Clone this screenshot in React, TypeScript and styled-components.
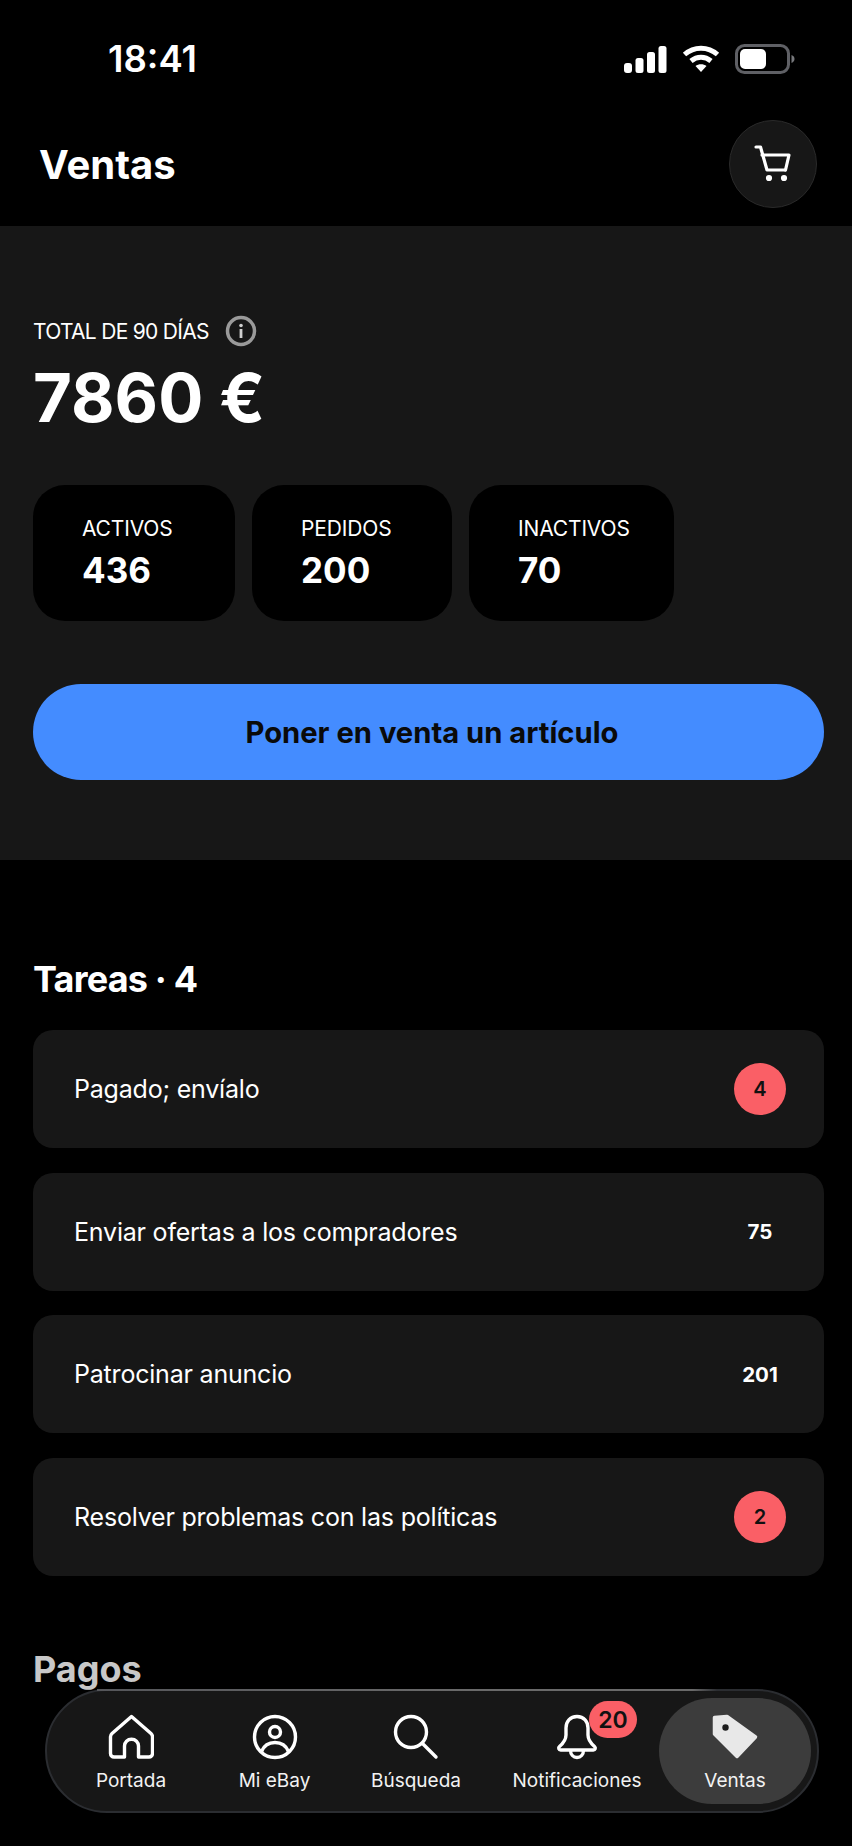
import React from "react";
import styled, { createGlobalStyle } from "styled-components";

const GlobalStyle = createGlobalStyle`
  html, body {
    margin: 0;
    padding: 0;
    background: #000;
  }
  body {
    font-family: "Inter", "Liberation Sans", sans-serif;
    color: #fff;
  }
`;

const Screen = styled.div`
  position: relative;
  width: 852px;
  height: 1846px;
  overflow: hidden;
  background: #000;
`;

const StatusBar = styled.div`
  height: 118px;
  padding: 0 57px 0 108px;
  box-sizing: border-box;
  display: flex;
  align-items: center;
  justify-content: space-between;
`;

const Clock = styled.span`
  font-size: 36.5px;
  font-weight: 600;
`;

const StatusIcons = styled.div`
  display: flex;
  align-items: center;
  gap: 15px;
`;

const Header = styled.header`
  height: 108px;
  padding: 0 35px 16px 39px;
  box-sizing: border-box;
  display: flex;
  align-items: center;
  justify-content: space-between;
`;

const PageTitle = styled.h1`
  margin: 0;
  font-size: 40px;
  font-weight: 700;
`;

const CartButton = styled.button`
  width: 88px;
  height: 88px;
  border: 1px solid #2a2a2a;
  border-radius: 50%;
  background: #171717;
  display: flex;
  align-items: center;
  justify-content: center;
  padding: 0;
`;

const Hero = styled.section`
  height: 634px;
  padding: 88px 28px 0 33px;
  box-sizing: border-box;
  background: #171717;
`;

const TotalRow = styled.div`
  display: flex;
  align-items: center;
  gap: 16px;
  height: 34px;
  font-size: 21px;
  letter-spacing: -0.7px;
`;

const TotalValue = styled.div`
  margin-top: 10px;
  font-size: 67px;
  line-height: 80px;
  font-weight: 700;
`;

const StatRow = styled.div`
  margin-top: 47px;
  display: flex;
  gap: 17px;
`;

const StatCard = styled.div<{ $width: number }>`
  width: ${(p) => p.$width}px;
  height: 136px;
  padding: 31px 0 0 49px;
  box-sizing: border-box;
  border-radius: 32px;
  background: #000;
`;

const StatLabel = styled.div`
  font-size: 21px;
  line-height: 26px;
  letter-spacing: -0.15px;
`;

const StatValue = styled.div`
  margin-top: 7px;
  font-size: 35px;
  line-height: 42px;
  font-weight: 700;
`;

const SellButton = styled.button`
  display: block;
  width: 791px;
  height: 96px;
  margin-top: 63px;
  padding: 0 0 0 7px;
  border: 0;
  border-radius: 48px;
  background: #448cff;
  color: #0a0a0a;
  font-family: inherit;
  font-size: 29.2px;
  font-weight: 700;
`;

const Tasks = styled.section`
  padding: 96px 28px 0 33px;
`;

const SectionTitle = styled.h2<{ $muted?: boolean }>`
  margin: 0;
  font-size: 36px;
  line-height: 46px;
  font-weight: 700;
  letter-spacing: ${(p) => (p.$muted ? "0" : "-0.8px")};
  color: ${(p) => (p.$muted ? "#c8c8c8" : "#fff")};
`;

const TaskList = styled.div`
  margin-top: 28px;
  display: flex;
  flex-direction: column;
  gap: 24.500px;
`;

const TaskRow = styled.div`
  height: 118px;
  padding: 0 38px 0 41px;
  box-sizing: border-box;
  display: flex;
  align-items: center;
  justify-content: space-between;
  border-radius: 20px;
  background: #171717;
  font-size: 25px;
  letter-spacing: -0.2px;
`;

const CountSlot = styled.div`
  width: 52px;
  display: flex;
  justify-content: center;
  letter-spacing: 0;
`;

const CountDot = styled.span`
  width: 52px;
  height: 52px;
  border-radius: 50%;
  background: #fa5f66;
  color: #111;
  display: flex;
  align-items: center;
  justify-content: center;
  font-size: 20px;
  font-weight: 600;
`;

const CountText = styled.span`
  font-size: 20.5px;
  font-weight: 700;
`;

const Payments = styled.section`
  padding: 70px 28px 0 33px;
`;

const TabBar = styled.nav`
  position: absolute;
  left: 45px;
  top: 1689px;
  width: 774px;
  height: 124px;
  box-sizing: border-box;
  padding: 7px 6px 7px 3px;
  border-radius: 62px;
  background: #171717;
  border: 2px solid #2b2d31;
  display: flex;
  align-items: stretch;

  /* lighter rim along the top, fading out before the last tab */
  &::before {
    content: "";
    position: absolute;
    left: 50px;
    top: -2px;
    width: 620px;
    height: 2px;
    background: linear-gradient(90deg, #55565a 0%, #6a6a6a 60%, #6a6a6a 96%, #2b2d31 100%);
  }
`;

const Tab = styled.div<{ $width: number; $active?: boolean }>`
  position: relative;
  width: ${(p) => p.$width}px;
  border-radius: 54px;
  background: ${(p) => (p.$active ? "#3c3c3c" : "transparent")};
  display: flex;
  flex-direction: column;
  align-items: center;
  justify-content: flex-start;
  padding-top: 16px;
  box-sizing: border-box;
  gap: 9px;
`;

const TabIcon = styled.div`
  position: relative;
  height: 46px;
  display: flex;
  align-items: center;
  justify-content: center;
`;

const TabLabel = styled.span`
  font-size: 19px;
  line-height: 24px;
  color: #f2f2f2;
  white-space: nowrap;
`;

const Bubble = styled.span`
  position: absolute;
  left: 33px;
  top: -13px;
  width: 48px;
  height: 37px;
  border-radius: 19px;
  background: #fa5f66;
  color: #111;
  display: flex;
  align-items: center;
  justify-content: center;
  font-size: 23px;
  font-weight: 600;
`;

const SignalIcon = () => (
  <svg width="43" height="27" viewBox="0 0 43 27" fill="#fff">
    <rect x="0" y="17" width="8" height="10" rx="3" />
    <rect x="11.5" y="12" width="8" height="15" rx="2.5" />
    <rect x="23" y="6" width="8" height="21" rx="2.5" />
    <rect x="34.5" y="0" width="8" height="27" rx="2.5" />
  </svg>
);

const WifiIcon = () => (
  <svg width="38" height="28" viewBox="0 0 38 28" fill="none" stroke="#fff" strokeWidth="5">
    <path d="M2.5 9.5C12 1 26 1 35.5 9.5" />
    <path d="M9 16c6-5 14-5 20 0" />
    <path d="M19 27l-5.5-6c3-2.5 8-2.5 11 0z" fill="#fff" stroke="none" />
  </svg>
);

const BatteryIcon = () => (
  <svg width="60" height="30" viewBox="0 0 60 30">
    <rect x="1.5" y="1.5" width="52" height="27" rx="8" fill="none" stroke="#5f6065" strokeWidth="3" />
    <rect x="5" y="5" width="26" height="20" rx="5" fill="#fff" />
    <path d="M56.5 11c2 .8 3 2.200 3 4s-1 3.200-3 4z" fill="#77787c" />
  </svg>
);

const CartIcon = () => (
  <svg width="38" height="38" viewBox="0 0 38 38" fill="none" stroke="#fff" strokeWidth="3.200" strokeLinecap="round" strokeLinejoin="round">
    <path d="M2 2h4.500L13 25h18" />
    <path d="M8 10h27l-3.500 15" />
    <circle cx="15" cy="33" r="1.500" fill="#fff" />
    <circle cx="30" cy="33" r="1.500" fill="#fff" />
  </svg>
);

const InfoIcon = () => (
  <svg width="32" height="32" viewBox="0 0 32 32" fill="none">
    <circle cx="16" cy="16" r="13.500" stroke="#9a9a9a" strokeWidth="3.500" />
    <circle cx="16" cy="10.500" r="1.800" fill="#cfcfcf" />
    <rect x="14.600" y="14" width="2.800" height="9" fill="#cfcfcf" />
  </svg>
);

const HomeIcon = () => (
  <svg width="46" height="46" viewBox="0 0 46 46" fill="none" stroke="#fff" strokeWidth="3.400" strokeLinejoin="round">
    <path d="M23.500 2.500L4 19.500C3 20.400 2.500 21.500 2.500 22.800V39.500c0 2 1.500 3.500 3.500 3.500H16.500V32c0-3.800 3-6.800 7-6.800s7 3 7 6.800v11H41c2 0 3.500-1.500 3.500-3.500V22.800c0-1.300-.5-2.400-1.500-3.300z" />
  </svg>
);

const ProfileIcon = () => (
  <svg width="46" height="46" viewBox="0 0 46 46" fill="none" stroke="#fff" strokeWidth="3.400">
    <circle cx="23" cy="23" r="20.500" />
    <circle cx="23" cy="18" r="5.500" />
    <path d="M9.500 37.500C12 31.500 17 28.500 23 28.500s11 3 13.500 9" />
  </svg>
);

const SearchIcon = () => (
  <svg width="46" height="46" viewBox="0 0 46 46" fill="none" stroke="#fff" strokeWidth="3.400" strokeLinecap="round">
    <circle cx="18" cy="18" r="15.500" />
    <path d="M29.500 29.500L43 43" />
  </svg>
);

const BellIcon = () => (
  <svg width="42" height="46" viewBox="0 0 42 46" fill="none" stroke="#fff" strokeWidth="3.400" strokeLinejoin="round">
    <path d="M21 2.500c-7 0-11 5-11 11.500v7c0 4.500-2.500 8-6.500 11.500-1.500 1.300-.8 3.500 1.200 3.500h32.600c2 0 2.700-2.200 1.200-3.500C34.500 29 32 25.500 32 21v-7C32 7.500 28 2.500 21 2.500z" />
    <path d="M14.500 36c0 4.500 2.800 7.500 6.500 7.500s6.500-3 6.500-7.500" />
  </svg>
);

const TagIcon = () => (
  <svg width="46" height="46" viewBox="0 0 46 46">
    <path
      d="M2.500 3.500L15 2.500L43.500 23L25 42.500L2.500 20z"
      fill="#e8e8e8"
      stroke="#e8e8e8"
      strokeWidth="3.500"
      strokeLinejoin="round"
    />
    <circle cx="13.500" cy="13.500" r="3.200" fill="#1e1e1e" />
  </svg>
);

const stats = [
  { label: "ACTIVOS", value: "436", width: 202 },
  { label: "PEDIDOS", value: "200", width: 200 },
  { label: "INACTIVOS", value: "70", width: 205 },
];

const tasks = [
  { label: "Pagado; envíalo", count: "4", alert: true },
  { label: "Enviar ofertas a los compradores", count: "75", alert: false },
  { label: "Patrocinar anuncio", count: "201", alert: false },
  { label: "Resolver problemas con las políticas", count: "2", alert: true },
];

export default function App() {
  return (
    <Screen>
      <GlobalStyle />
      <StatusBar>
        <Clock>18:41</Clock>
        <StatusIcons>
          <SignalIcon />
          <WifiIcon />
          <BatteryIcon />
        </StatusIcons>
      </StatusBar>
      <Header>
        <PageTitle>Ventas</PageTitle>
        <CartButton>
          <CartIcon />
        </CartButton>
      </Header>

      <Hero>
        <TotalRow>
          TOTAL DE 90 DÍAS
          <InfoIcon />
        </TotalRow>
        <TotalValue>7860 €</TotalValue>
        <StatRow>
          {stats.map((s) => (
            <StatCard key={s.label} $width={s.width}>
              <StatLabel>{s.label}</StatLabel>
              <StatValue>{s.value}</StatValue>
            </StatCard>
          ))}
        </StatRow>
        <SellButton>Poner en venta un artículo</SellButton>
      </Hero>

      <Tasks>
        <SectionTitle>Tareas · 4</SectionTitle>
        <TaskList>
          {tasks.map((t) => (
            <TaskRow key={t.label}>
              {t.label}
              <CountSlot>
                {t.alert ? <CountDot>{t.count}</CountDot> : <CountText>{t.count}</CountText>}
              </CountSlot>
            </TaskRow>
          ))}
        </TaskList>
      </Tasks>

      <Payments>
        <SectionTitle $muted>Pagos</SectionTitle>
      </Payments>

      <TabBar>
        <Tab $width={162}>
          <TabIcon><HomeIcon /></TabIcon>
          <TabLabel>Portada</TabLabel>
        </Tab>
        <Tab $width={125}>
          <TabIcon><ProfileIcon /></TabIcon>
          <TabLabel>Mi eBay</TabLabel>
        </Tab>
        <Tab $width={158}>
          <TabIcon><SearchIcon /></TabIcon>
          <TabLabel>Búsqueda</TabLabel>
        </Tab>
        <Tab $width={164}>
          <TabIcon>
            <BellIcon />
            <Bubble>20</Bubble>
          </TabIcon>
          <TabLabel>Notificaciones</TabLabel>
        </Tab>
        <Tab $width={152} $active>
          <TabIcon><TagIcon /></TabIcon>
          <TabLabel>Ventas</TabLabel>
        </Tab>
      </TabBar>
    </Screen>
  );
}
